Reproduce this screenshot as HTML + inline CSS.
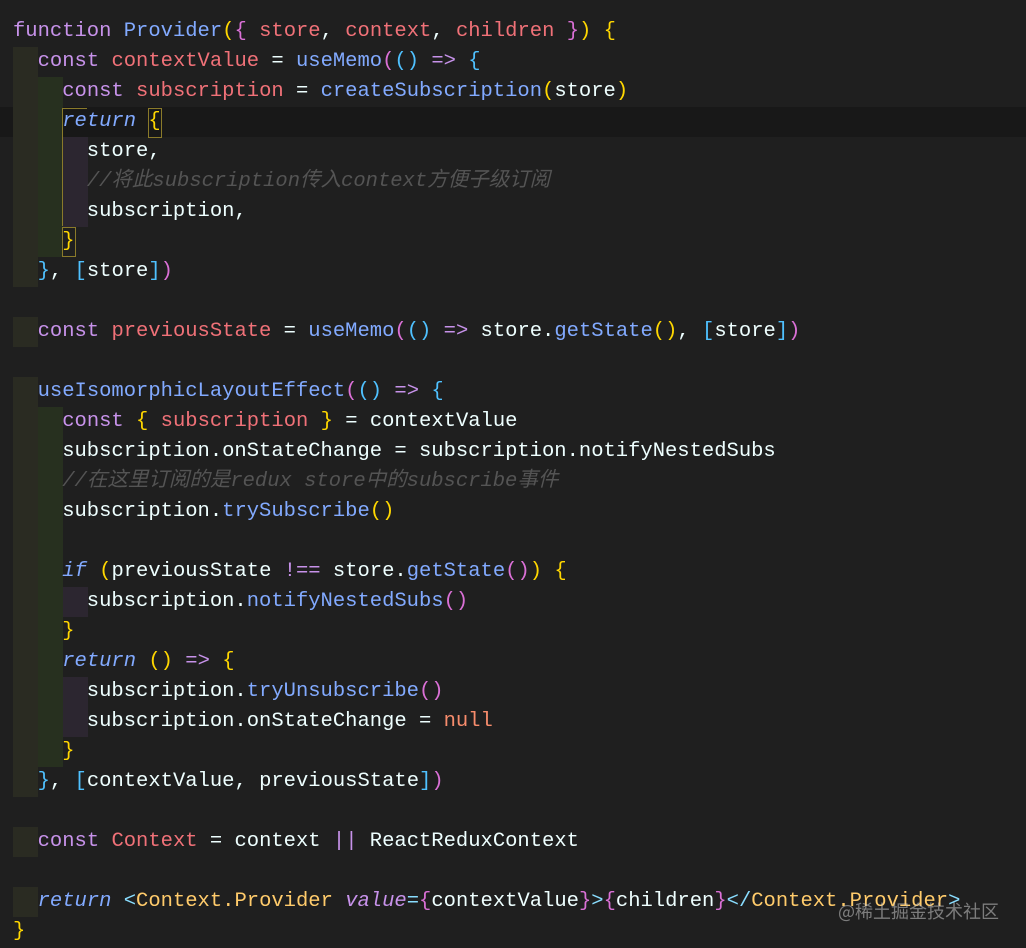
<!DOCTYPE html>
<html><head><meta charset="utf-8"><style>
html,body{margin:0;padding:0;background:#1f1f1f;width:1026px;height:948px;overflow:hidden;position:relative}
.code{position:absolute;left:13px;top:17px;font-family:"Liberation Mono","Noto Sans CJK SC",monospace;font-size:20.5px;line-height:30px;color:#eeffff;white-space:pre}
.band{position:absolute;height:30px}
.k{color:#c792ea}.f{color:#82aaff}.v{color:#f07178}.r{color:#82aaff;font-style:italic}
.c{color:#545454;font-style:italic}.g{color:#ffd700}.o{color:#da70d6}.b{color:#4fc1ff}
.n{color:#f78c6c}.t{color:#ffcb6b}.lb{color:#89ddff}.a{color:#c792ea;font-style:italic}
.wm{position:absolute;left:838px;top:898px;font-family:"Noto Sans CJK SC",sans-serif;font-size:18px;color:rgba(200,200,200,0.55)}
</style></head><body>
<div class="band" style="left:0;top:107px;width:1026px;background:#181818"></div>
<div id="bands"></div>
<div style="position:absolute;left:62px;top:108px;width:24px;height:28px;border:1px solid #8a7a2a;border-bottom:none;border-right:none"></div>
<div style="position:absolute;left:62px;top:136px;width:1px;height:90px;background:#8a7a2a"></div>
<div style="position:absolute;left:62px;top:227px;width:12px;height:28px;border:1px solid #8a7a2a"></div>
<div style="position:absolute;left:148px;top:108px;width:12px;height:28px;border:1px solid #8a7a2a"></div>
<div class="code"><span class="k">function</span> <span class="f">Provider</span><span class="g">(</span><span class="o">{</span> <span class="v">store</span>, <span class="v">context</span>, <span class="v">children</span> <span class="o">}</span><span class="g">)</span> <span class="g">{</span>
  <span class="k">const</span> <span class="v">contextValue</span> = <span class="f">useMemo</span><span class="o">(</span><span class="b">()</span> <span class="k">=&gt;</span> <span class="b">{</span>
    <span class="k">const</span> <span class="v">subscription</span> = <span class="f">createSubscription</span><span class="g">(</span>store<span class="g">)</span>
    <span class="r">return</span> <span class="g">{</span>
      store,
      <span class="c">//将此subscription传入context方便子级订阅</span>
      subscription,
    <span class="g">}</span>
  <span class="b">}</span>, <span class="b">[</span>store<span class="b">]</span><span class="o">)</span>

  <span class="k">const</span> <span class="v">previousState</span> = <span class="f">useMemo</span><span class="o">(</span><span class="b">()</span> <span class="k">=&gt;</span> store.<span class="f">getState</span><span class="g">()</span>, <span class="b">[</span>store<span class="b">]</span><span class="o">)</span>

  <span class="f">useIsomorphicLayoutEffect</span><span class="o">(</span><span class="b">()</span> <span class="k">=&gt;</span> <span class="b">{</span>
    <span class="k">const</span> <span class="g">{</span> <span class="v">subscription</span> <span class="g">}</span> = contextValue
    subscription.onStateChange = subscription.notifyNestedSubs
    <span class="c">//在这里订阅的是redux store中的subscribe事件</span>
    subscription.<span class="f">trySubscribe</span><span class="g">()</span>

    <span class="r">if</span> <span class="g">(</span>previousState <span class="k">!==</span> store.<span class="f">getState</span><span class="o">()</span><span class="g">)</span> <span class="g">{</span>
      subscription.<span class="f">notifyNestedSubs</span><span class="o">()</span>
    <span class="g">}</span>
    <span class="r">return</span> <span class="g">()</span> <span class="k">=&gt;</span> <span class="g">{</span>
      subscription.<span class="f">tryUnsubscribe</span><span class="o">()</span>
      subscription.onStateChange = <span class="n">null</span>
    <span class="g">}</span>
  <span class="b">}</span>, <span class="b">[</span>contextValue, previousState<span class="b">]</span><span class="o">)</span>

  <span class="k">const</span> <span class="v">Context</span> = context <span class="k">||</span> ReactReduxContext

  <span class="r">return</span> <span class="lb">&lt;</span><span class="t">Context.Provider</span> <span class="a">value</span><span class="lb">=</span><span class="o">{</span>contextValue<span class="o">}</span><span class="lb">&gt;</span><span class="o">{</span>children<span class="o">}</span><span class="lb">&lt;/</span><span class="t">Context.Provider</span><span class="lb">&gt;</span>
<span class="g">}</span></div>
<div class="wm">@稀土掘金技术社区</div>
<script>
var h='';
function band(x,w,c,lines){lines.forEach(function(l){h+='<div class="band" style="left:'+x+'px;width:'+w+'px;top:'+(17+30*(l-1))+'px;background:'+c+'"></div>';});}
var r=function(a,b){var o=[];for(var i=a;i<=b;i++)o.push(i);return o;};
band(13,25,'#2a2b22',r(2,9).concat([11],r(13,26),[28,30]));
band(38,25,'#27301f',r(3,8).concat(r(14,25)));
band(63,25,'#2c2630',[5,6,7,20,23,24]);
document.getElementById('bands').innerHTML=h;
</script>
</body></html>
